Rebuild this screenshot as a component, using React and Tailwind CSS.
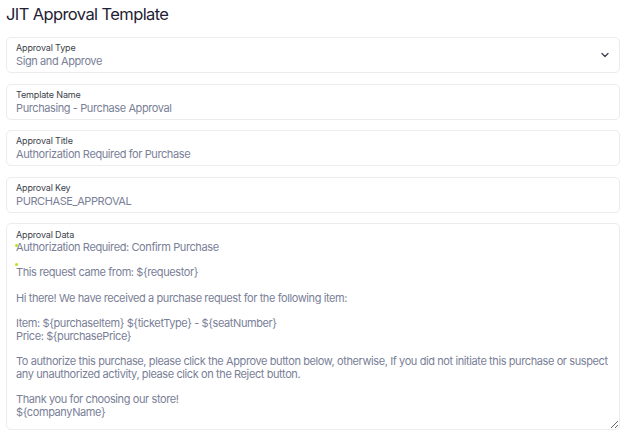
import { ChevronDown } from 'lucide-react';

const fields = [
  { label: 'Template Name', value: 'Purchasing - Purchase Approval' },
  { label: 'Approval Title', value: 'Authorization Required for Purchase' },
  { label: 'Approval Key', value: 'PURCHASE_APPROVAL' },
];

const body = `Authorization Required: Confirm Purchase

This request came from: \${requestor}

Hi there! We have received a purchase request for the following item:

Item: \${purchaseItem} \${ticketType} - \${seatNumber}
Price: \${purchasePrice}

To authorize this purchase, please click the Approve button below, otherwise, If you did not initiate this purchase or suspect any unauthorized activity, please click on the Reject button.

Thank you for choosing our store!
\${companyName}`;

function Field({ label, value, select }) {
  return (
    <div className="flex items-center h-[36px] rounded-[5px] border border-[#ececef] bg-white pl-[9px] pr-[8px]">
      <div className="flex-1 min-w-0">
        <div className="text-[9px] leading-[12px] tracking-[-0.15px] text-[#3b3f4a]">{label}</div>
        <div className="text-[11px] leading-[14px] tracking-[-0.4px] text-[#7a8097]">{value}</div>
      </div>
      {select && <ChevronDown size={12} strokeWidth={2.5} className="text-[#3b3f4a]" />}
    </div>
  );
}

export default function App() {
  return (
    <div className="w-[624px] h-[440px] bg-white px-[6px] pt-[3px] overflow-hidden" style={{ fontFamily: 'Inter, "Noto Sans", sans-serif' }}>
      <h1 className="text-[16.5px] leading-[22px] font-normal tracking-[-0.6px] text-[#1e2233] mb-[12px]">JIT Approval Template</h1>
      <div className="flex flex-col gap-[10.5px] w-[614px]">
        <Field label="Approval Type" value="Sign and Approve" select />
        {fields.map(f => <Field key={f.label} {...f} />)}
        <div className="relative rounded-[5px] border border-[#ececef] bg-white flex flex-col">
          <div className="text-[9px] leading-[12px] tracking-[-0.15px] text-[#3b3f4a] pl-[9px] pt-[5px]">Approval Data</div>
          <textarea
            defaultValue={body}
            className="w-full h-[188px] resize-y outline-none pl-[9px] pr-[4px] text-[11px] leading-[12.65px] tracking-[-0.4px] text-[#7a8097] bg-transparent"
            style={{ fontFamily: 'Inter, "Noto Sans", sans-serif' }}
          />
          <span className="absolute left-[8px] top-[20px] w-[3px] h-[3px] rounded-full bg-[#b5e61d]" />
          <span className="absolute left-[8px] top-[39px] w-[3px] h-[3px] rounded-full bg-[#b5e61d]" />
        </div>
      </div>
    </div>
  );
}
